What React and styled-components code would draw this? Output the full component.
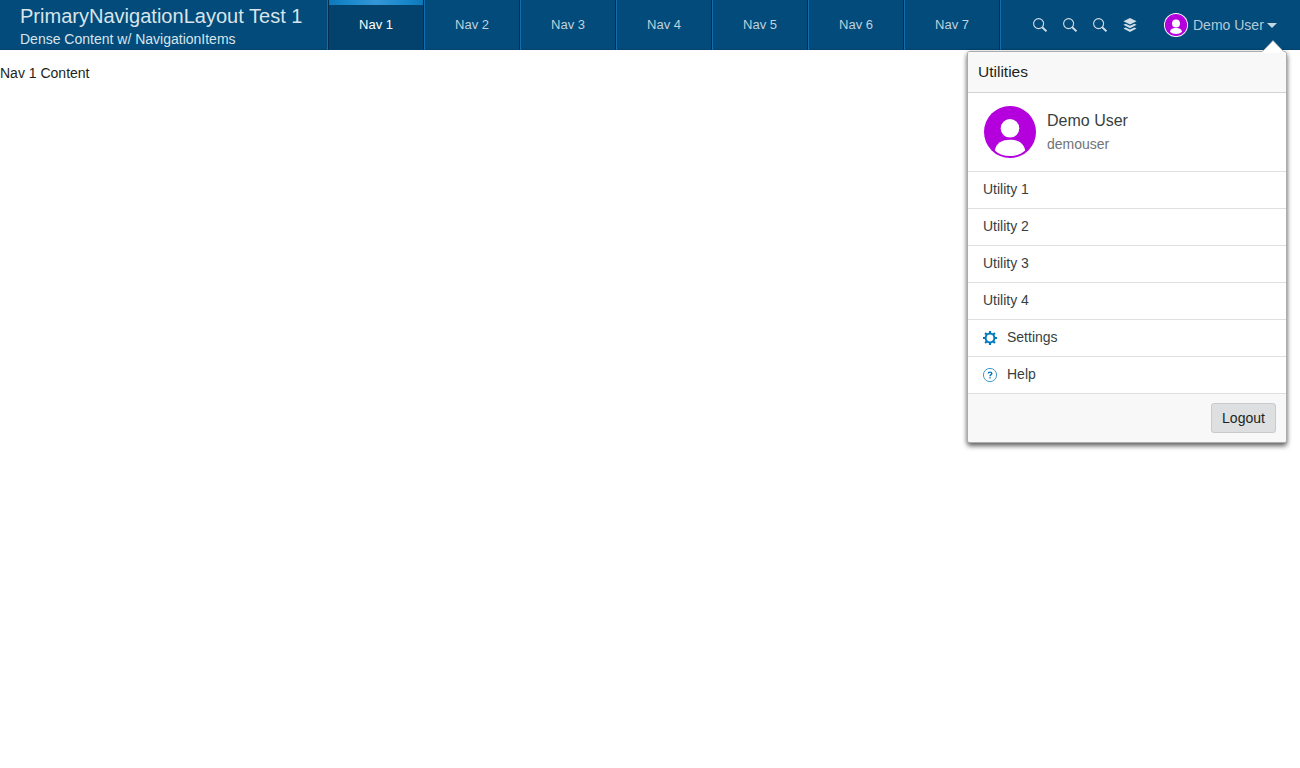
import React from "react";
import styled, { createGlobalStyle, css } from "styled-components";

const GlobalStyle = createGlobalStyle`
  *, *::before, *::after { box-sizing: border-box; }
  html, body { margin: 0; background: #fff; }
  body {
    color: #1c1f21;
    font-family: "Liberation Sans", Arial, sans-serif;
    font-size: 14px;
    line-height: 20px;
    overflow: hidden;
  }
  svg { display: block; flex: none; }
`;

const Layout = styled.div`
  position: relative;
  height: 768px;
`;

const Header = styled.header`
  display: flex;
  height: 50px;
  background: #024b7a;
  box-shadow: inset 0 -1px 0 #02436e;
  color: #d9e4eb;
`;

const Titles = styled.div`
  width: 327px;
  padding: 4px 0 0 20px;
  white-space: nowrap;
`;

const Title = styled.div`
  font-size: 20.05px;
  line-height: 24px;
`;

const Subtitle = styled.div`
  font-size: 14px;
  line-height: 22px;
`;

const Tabs = styled.nav`
  display: flex;
  border-left: 1px solid #0f6dae;
`;

const Tab = styled.button`
  position: relative;
  width: 96px;
  padding: 0 0 1px;
  border: 0;
  border-right: 1px solid #012f4d;
  background: transparent;
  color: #bfd2de;
  font: 13px/20px "Liberation Sans", Arial, sans-serif;
  & + & { border-left: 1px solid #0f6dae; }
  ${({ $active }) =>
    $active &&
    css`
      border-left: 1px solid #012f4d;
      background: #02426c;
      color: #fff;
      &::before {
        content: "";
        position: absolute;
        inset: 0 0 auto;
        height: 5px;
        background: linear-gradient(90deg, #0d78ba, #1a88cc 20%, #3496d6 50%, #1a88cc 80%, #0d78ba);
      }
    `}
`;

const TabEnd = styled.div`
  width: 1px;
  background: #0f6dae;
`;

const Actions = styled.div`
  display: flex;
  align-items: center;
  gap: 16px;
  margin-left: 32px;
`;

const UserButton = styled.button`
  display: flex;
  align-items: center;
  margin-left: 27px;
  padding: 0;
  border: 0;
  background: transparent;
  color: #b3cad8;
  font: 14px/20px "Liberation Sans", Arial, sans-serif;
  white-space: nowrap;
`;

const UserLabel = styled.span`
  margin: 0 3px 0 5px;
`;

const Content = styled.main`
  padding-top: 13px;
`;

const Popup = styled.section`
  position: absolute;
  top: 51px;
  left: 967px;
  width: 320px;
  height: 392px;
  border: 1px solid #a9adaf;
  border-radius: 3px;
  background: #fff;
  box-shadow: 0 3px 5px rgba(0, 0, 0, 0.6), 0 0 4px rgba(0, 0, 0, 0.1);
`;

const Arrow = styled.svg`
  position: absolute;
  top: -12px;
  left: 293px;
`;

const PopupHeader = styled.header`
  height: 41px;
  padding: 9px 10px;
  border-bottom: 1px solid #d0d2d3;
  border-radius: 2px 2px 0 0;
  background: #f8f8f8;
  font-size: 15.5px;
  line-height: 22px;
`;

const Profile = styled.div`
  display: flex;
  height: 79px;
  padding: 13px 16px;
  gap: 11px;
  border-bottom: 1px solid #dedfe0;
`;

const ProfileName = styled.div`
  padding-top: 3px;
  color: #383f42;
  font-size: 16px;
  line-height: 24px;
`;

const ProfileId = styled.div`
  color: #6f7477;
  line-height: 22px;
`;

const MenuRow = styled.div`
  display: flex;
  align-items: center;
  height: 37px;
  padding: 0 15px 2px;
  gap: 10px;
  border-bottom: 1px solid #dedfe0;
  color: #383f42;
  svg { position: relative; top: 1px; }
`;

const PopupFooter = styled.footer`
  display: flex;
  justify-content: flex-end;
  height: 48px;
  padding: 9px 10px;
  border-radius: 0 0 2px 2px;
  background: #f8f8f8;
`;

const LogoutButton = styled.button`
  width: 65px;
  height: 30px;
  padding: 0;
  border: 1px solid #c8cacb;
  border-radius: 3px;
  background: #dedfe0;
  color: #1c1f21;
  font: 14px/20px "Liberation Sans", Arial, sans-serif;
`;

const SearchIcon = () => (
  <svg width="14" height="14" viewBox="0 0 14 14" fill="none" stroke="#d0dee7">
    <circle cx="5.6" cy="5.6" r="5" strokeWidth="1.1" />
    <path d="M9.2 9.2 13.5 13.3" strokeWidth="1.9" />
  </svg>
);

const LayersIcon = () => (
  <svg width="14" height="14" viewBox="0 0 14 14" fill="#d0dee7">
    <path d="M7 0 13.6 3.3 7 6.6 0.4 3.3Z" />
    <path d="M0.4 6.8 2.6 5.7 7 7.8 11.4 5.7 13.6 6.8 7 10.2Z" />
    <path d="M0.4 10.5 2.6 9.4 7 11.5 11.4 9.4 13.6 10.5 7 13.9Z" />
  </svg>
);

const SmallAvatar = () => (
  <svg width="24" height="24" viewBox="0 0 24 24">
    <circle cx="12" cy="12" r="12" fill="#fff" />
    <circle cx="12" cy="12" r="11.1" fill="#b400dc" />
    <circle cx="12" cy="10.4" r="4" fill="#fff" />
    <path d="M6 18.7C6.4 16 9 15.1 12 15.1S17.6 16 18 18.7C16.3 20.2 14.4 20.9 12 20.9S7.7 20.2 6 18.7Z" fill="#fff" />
  </svg>
);

const LargeAvatar = () => (
  <svg width="52" height="52" viewBox="0 0 52 52">
    <circle cx="26" cy="26" r="26" fill="#b400dc" />
    <circle cx="26" cy="22.3" r="9.3" fill="#fff" />
    <path d="M10.8 44.4C12.3 37 18 33.8 26 33.8S39.7 37 41.2 44.4C37.2 48 32 50 26 50S14.8 48 10.8 44.4Z" fill="#fff" />
  </svg>
);

const Caret = () => (
  <svg width="10" height="5" viewBox="0 0 10 5">
    <path d="M0 0H10L5 5Z" fill="#c3d5e0" />
  </svg>
);

const GearIcon = () => (
  <svg width="14" height="14" viewBox="0 0 14 14" fill="none" stroke="#0079be">
    <circle cx="7" cy="7" r="4.4" strokeWidth="2" />
    <path
      d="M7 0V2.5M7 11.5V14M0 7H2.5M11.5 7H14M2.1 2.1 3.8 3.8M10.2 10.2 11.9 11.9M2.1 11.9 3.8 10.2M10.2 3.8 11.9 2.1"
      strokeWidth="2.1"
    />
  </svg>
);

const HelpIcon = () => (
  <svg width="14" height="14" viewBox="0 0 14 14" fill="none" stroke="#0079be">
    <circle cx="7" cy="7" r="6.6" strokeWidth=".75" />
    <path d="M5.2 5.5C5.2 4.5 5.9 4.1 7 4.1S8.8 4.5 8.8 5.5C8.8 6.7 7 6.6 7 8.2M7 9.2V10.6" strokeWidth="1.4" />
  </svg>
);

const tabs = ["Nav 1", "Nav 2", "Nav 3", "Nav 4", "Nav 5", "Nav 6", "Nav 7"];
const rows = [
  { label: "Utility 1" },
  { label: "Utility 2" },
  { label: "Utility 3" },
  { label: "Utility 4" },
  { label: "Settings", Icon: GearIcon },
  { label: "Help", Icon: HelpIcon },
];

export default function App() {
  return (
    <Layout>
      <GlobalStyle />
      <Header>
        <Titles>
          <Title>PrimaryNavigationLayout Test 1</Title>
          <Subtitle>Dense Content w/ NavigationItems</Subtitle>
        </Titles>
        <Tabs>
          {tabs.map((label, i) => (
            <Tab key={label} $active={i === 0}>{label}</Tab>
          ))}
          <TabEnd />
        </Tabs>
        <Actions>
          <SearchIcon />
          <SearchIcon />
          <SearchIcon />
          <LayersIcon />
        </Actions>
        <UserButton>
          <SmallAvatar />
          <UserLabel>Demo User</UserLabel>
          <Caret />
        </UserButton>
      </Header>
      <Content>Nav 1 Content</Content>
      <Popup>
        <PopupHeader>Utilities</PopupHeader>
        <Arrow width="24" height="13" viewBox="0 0 24 13">
          <path d="M1.5 11.5 12 0.6 22.5 11.5V13H1.5Z" fill="#fff" />
          <path d="M1.5 11.5 12 0.6 22.5 11.5" fill="none" stroke="#a9adaf" strokeWidth=".8" />
        </Arrow>
        <Profile>
          <LargeAvatar />
          <div>
            <ProfileName>Demo User</ProfileName>
            <ProfileId>demouser</ProfileId>
          </div>
        </Profile>
        {rows.map(({ label, Icon }) => (
          <MenuRow key={label}>
            {Icon && <Icon />}
            {label}
          </MenuRow>
        ))}
        <PopupFooter>
          <LogoutButton>Logout</LogoutButton>
        </PopupFooter>
      </Popup>
    </Layout>
  );
}
